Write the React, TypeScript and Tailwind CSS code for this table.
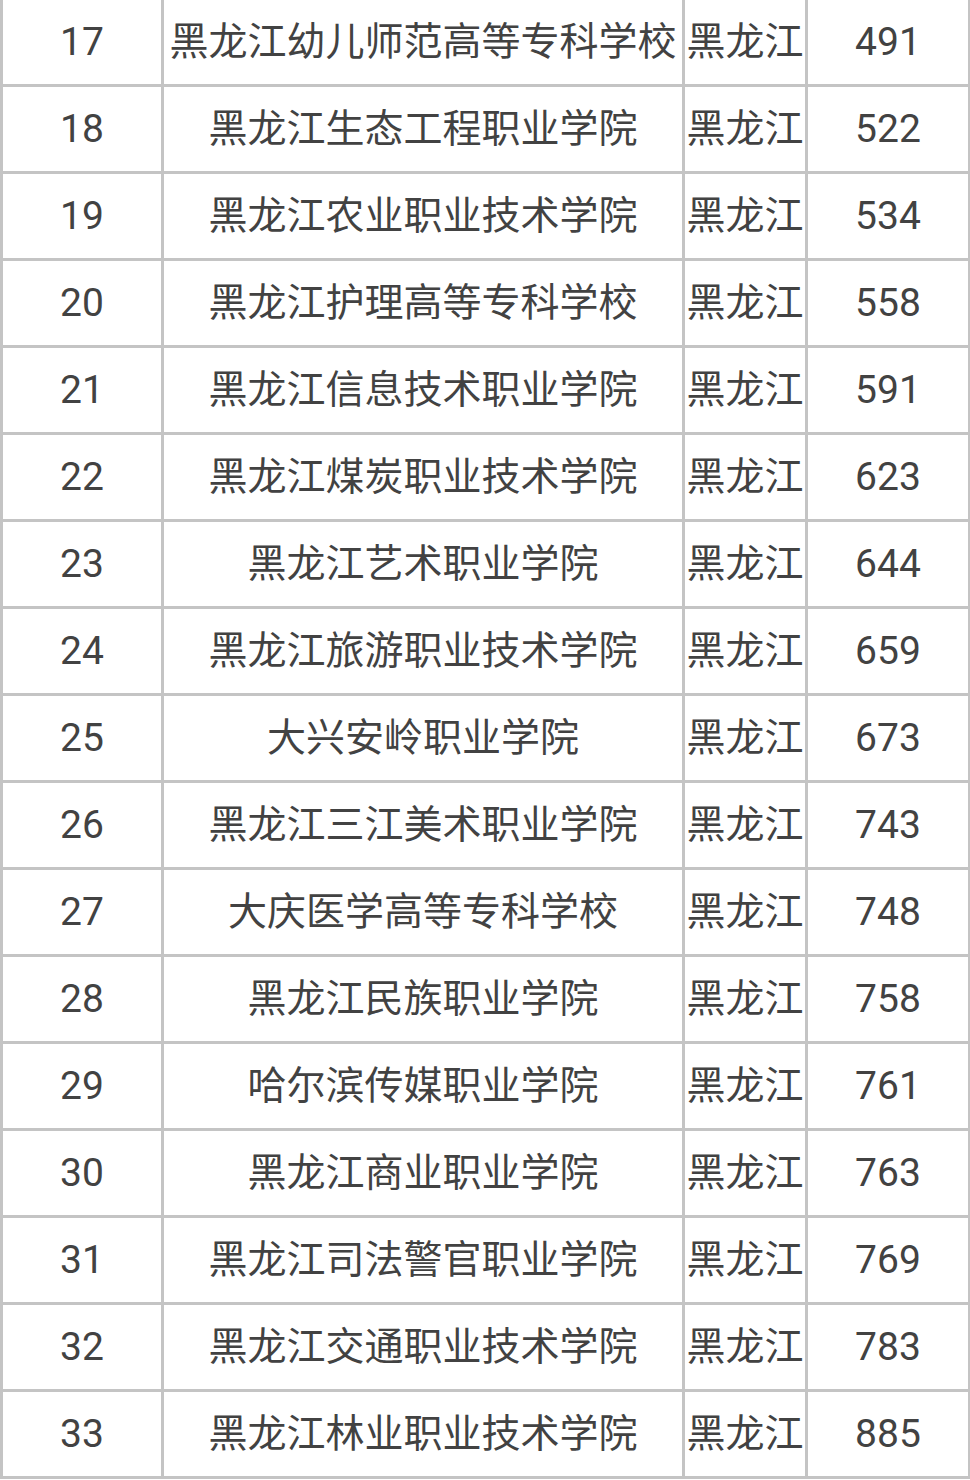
const rows: [number, string, string, number][] = [
  [17, "黑龙江幼儿师范高等专科学校", "黑龙江", 491],
  [18, "黑龙江生态工程职业学院", "黑龙江", 522],
  [19, "黑龙江农业职业技术学院", "黑龙江", 534],
  [20, "黑龙江护理高等专科学校", "黑龙江", 558],
  [21, "黑龙江信息技术职业学院", "黑龙江", 591],
  [22, "黑龙江煤炭职业技术学院", "黑龙江", 623],
  [23, "黑龙江艺术职业学院", "黑龙江", 644],
  [24, "黑龙江旅游职业技术学院", "黑龙江", 659],
  [25, "大兴安岭职业学院", "黑龙江", 673],
  [26, "黑龙江三江美术职业学院", "黑龙江", 743],
  [27, "大庆医学高等专科学校", "黑龙江", 748],
  [28, "黑龙江民族职业学院", "黑龙江", 758],
  [29, "哈尔滨传媒职业学院", "黑龙江", 761],
  [30, "黑龙江商业职业学院", "黑龙江", 763],
  [31, "黑龙江司法警官职业学院", "黑龙江", 769],
  [32, "黑龙江交通职业技术学院", "黑龙江", 783],
  [33, "黑龙江林业职业技术学院", "黑龙江", 885],
];

const cell =
  "flex h-[84px] items-center justify-center whitespace-nowrap bg-white text-[39px] leading-none text-[#424242]";

export default function App() {
  return (
    <div className="min-h-[1480px] w-[970px] bg-white">
      <div
        className="grid grid-cols-[158px_518px_120px_160px] gap-[3px] bg-[#c4c4c4] pb-[3px] pl-[3px] pr-[2px]"
        style={{ fontFamily: 'Roboto, "Noto Sans CJK SC", sans-serif' }}
      >
        {rows.map(([rank, name, region, score]) => (
          <div key={rank} className="contents">
            <div className={cell}>{rank}</div>
            <div className={cell}>{name}</div>
            <div className={cell}>{region}</div>
            <div className={cell}>{score}</div>
          </div>
        ))}
      </div>
    </div>
  );
}
